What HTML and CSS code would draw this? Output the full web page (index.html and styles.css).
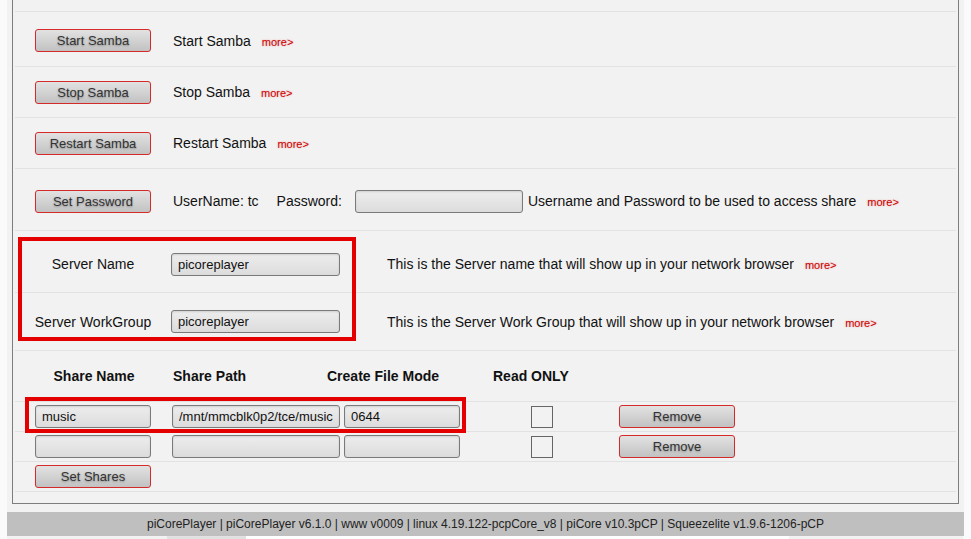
FILE: index.html
```html
<!DOCTYPE html>
<html lang="en">
<head>
  <meta charset="UTF-8">
  <title>piCorePlayer - Samba</title>
  <link rel="stylesheet" href="styles.css">
</head>
<body>

  <div class="wrap">
    <div class="panel">
      <div class="row row-cut"></div>

      <!-- SAMBA CONTROL -->
      <div class="row row-first">
        <div class="col1"><button class="btn">Start Samba</button></div>
        <span class="desc">Start Samba</span><a href="#" class="more">more&gt;</a>
      </div>
      <div class="row row-50">
        <div class="col1"><button class="btn">Stop Samba</button></div>
        <span class="desc">Stop Samba</span><a href="#" class="more">more&gt;</a>
      </div>
      <div class="row row-50">
        <div class="col1"><button class="btn">Restart Samba</button></div>
        <span class="desc">Restart Samba</span><a href="#" class="more">more&gt;</a>
      </div>

      <!-- PASSWORD -->
      <div class="row row-61">
        <div class="col1"><button class="btn">Set Password</button></div>
        <span class="desc user">UserName: tc</span>
        <span class="desc">Password:</span>
        <input type="password" class="field pass">
        <span class="desc">Username and Password to be used to access share</span><a href="#" class="more">more&gt;</a>
      </div>

      <!-- SERVER -->
      <div class="row row-server">
        <div class="col1 label">Server Name</div>
        <input type="text" class="field wide" value="picoreplayer">
        <span class="desc info">This is the Server name that will show up in your network browser</span><a href="#" class="more">more&gt;</a>
      </div>
      <div class="row row-57">
        <div class="col1 label">Server WorkGroup</div>
        <input type="text" class="field wide" value="picoreplayer">
        <span class="desc info">This is the Server Work Group that will show up in your network browser</span><a href="#" class="more">more&gt;</a>
      </div>

      <!-- SHARES -->
      <div class="row row-50 heads">
        <div class="col1 label">Share Name</div>
        <span class="h-path">Share Path</span>
        <span class="h-mode">Create File Mode</span>
        <span>Read ONLY</span>
      </div>
      <div class="row row-29">
        <div class="col1 share"><input type="text" class="field" value="music"></div>
        <input type="text" class="field path" value="/mnt/mmcblk0p2/tce/music">
        <input type="text" class="field mode" value="0644">
        <span class="check"></span>
        <button class="btn">Remove</button>
      </div>
      <div class="row row-29">
        <div class="col1 share"><input type="text" class="field"></div>
        <input type="text" class="field path">
        <input type="text" class="field mode">
        <span class="check"></span>
        <button class="btn">Remove</button>
      </div>
      <div class="row row-29">
        <div class="col1"><button class="btn">Set Shares</button></div>
      </div>

      <!-- highlight marks -->
      <div class="mark mark-server"></div>
      <div class="mark mark-share"></div>
    </div>
  </div>

  <footer>piCorePlayer | piCorePlayer v6.1.0 | www v0009 | linux 4.19.122-pcpCore_v8 | piCore v10.3pCP | Squeezelite v1.9.6-1206-pCP</footer>

  <div class="tabs">
    <span class="t1"></span><span class="t2"></span><span class="t3"></span><span class="t4"></span>
  </div>

</body>
</html>
```

FILE: styles.css
```css
/* BASE */
* { margin: 0; padding: 0; box-sizing: border-box; }
body {
  font-family: "Liberation Sans", Arial, sans-serif;
  font-size: 14px;
  color: #111;
  background: #fafafa;
  height: 539px;
  overflow: hidden;
}
a { text-decoration: none; }

/* WRAPPER + PANEL */
.wrap {
  margin: 0 7px;
  background: #f2f2f2;
  padding: 0 5px 8px;
}
.panel {
  position: relative;
  border: 1px solid #7d7d7d;
  border-top: none;
  padding: 0 2px 11px;
}

/* ROWS */
.row {
  display: flex;
  align-items: center;
  border-bottom: 1px solid #e2e2e2;
  white-space: nowrap;
}
.row-cut { height: 12px; }
.row-first { height: 55px; padding-top: 3px; }
.row-50 { height: 51px; }
.row-61 { height: 62px; padding-top: 3px; }
.row-server { height: 62px; padding-top: 5px; }
.row-57 { height: 58px; }
.row-29 { height: 30px; }

.col1 { width: 158px; flex-shrink: 0; padding-left: 20px; }
.col1.label { padding-left: 0; width: 156px; text-align: center; }
.col1.share { width: 157px; }

.desc { color: #111; }
.desc.user { margin-right: 18px; }
.desc.info { margin-left: 47px; }

.more {
  color: #cc0000;
  font-size: 11px;
  margin-left: 11px;
  margin-top: 2px;
  text-shadow: 0 0 2px rgba(220, 0, 0, 0.35);
}

/* BUTTONS */
.btn {
  width: 116px;
  height: 23px;
  font-family: inherit;
  font-size: 13px;
  color: #333;
  border: 1px solid #d42a2a;
  border-radius: 3px;
  background: linear-gradient(#e2e2e2, #c2c2c2);
  text-shadow: 0 1px 2px rgba(0, 0, 0, 0.3);
  cursor: pointer;
}

/* INPUTS */
.field {
  width: 116px;
  height: 23px;
  font-family: inherit;
  font-size: 13px;
  color: #111;
  padding: 0 6px;
  border: 1px solid #7a7a7a;
  border-radius: 3px;
  background: linear-gradient(#ededed, #dcdcdc);
  box-shadow: inset 0 1px 2px rgba(0, 0, 0, 0.12);
}
.field.wide { width: 169px; }
.field.path { width: 168px; }
.field.pass { width: 168px; margin: 0 5px 0 13px; }
.field.mode { margin-left: 4px; }

.check {
  width: 22px;
  height: 22px;
  border: 1px solid #666;
  margin-left: 71px;
  margin-right: 66px;
}

/* SHARE HEADINGS */
.heads { font-weight: bold; color: #111; }
.heads .col1 { width: 158px; }
.h-path { width: 154px; }
.h-mode { width: 166px; }

/* HIGHLIGHT MARKS */
.mark {
  position: absolute;
  border: 4px solid #e50000;
}
.mark-server { left: 5px; top: 237px; width: 338px; height: 104px; }
.mark-share { left: 12px; top: 397px; width: 441px; height: 36px; }

/* FOOTER */
footer {
  margin: 0 7px;
  height: 24px;
  line-height: 24px;
  background: #bfbfbf;
  color: #222;
  font-size: 12px;
  text-align: center;
}
.tabs { display: flex; margin: 0 8px 0 7px; height: 4px; }
.tabs span { height: 4px; }
.t1 { width: 160px; background: #f2f2f2; }
.t2 { width: 79px; background: #e1e1e1; }
.t3 { width: 543px; background: #fff; }
.t4 { flex: 1; background: #f2f2f2; }
```
